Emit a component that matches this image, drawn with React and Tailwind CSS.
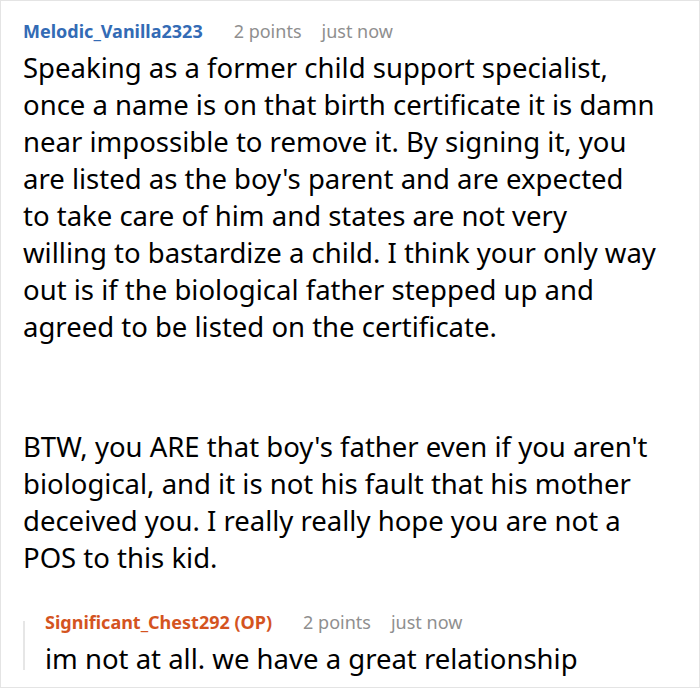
import React from "react";

const Header = ({ name, nameClass, points, time }) => (
  <div className="flex items-baseline text-[18px] leading-[24px]">
    <span className={`font-bold ${nameClass}`}>{name}</span>
    <span className="ml-[31px] text-[#8f8f8f]">{points}</span>
    <span className="ml-[20px] text-[#8f8f8f]">{time}</span>
  </div>
);

const App = () => {
  return (
    <div
      className="w-[700px] h-[688px] border border-[#e4e4e4] bg-white pl-[22px] pt-[18px] overflow-hidden"
      style={{ fontFamily: '"Noto Sans", "Open Sans", sans-serif' }}
    >
      <Header
        name="Melodic_Vanilla2323"
        nameClass="text-[#336bb5]"
        points="2 points"
        time="just now"
      />
      <div className="mt-[6px] text-[27.5px] leading-[37px] text-black">
        <p>
          Speaking as a former child support specialist,
          <br />
          once a name is on that birth certificate it is damn
          <br />
          near impossible to remove it. By signing it, you
          <br />
          are listed as the boy's parent and are expected
          <br />
          to take care of him and states are not very
          <br />
          willing to bastardize a child. I think your only way
          <br />
          out is if the biological father stepped up and
          <br />
          agreed to be listed on the certificate.
        </p>
        <p className="mt-[83px]">
          BTW, you ARE that boy's father even if you aren't
          <br />
          biological, and it is not his fault that his mother
          <br />
          deceived you. I really really hope you are not a
          <br />
          POS to this kid.
        </p>
      </div>
      <div className="mt-[34px] flex">
        <div className="w-[2px] bg-[#e6e6e6] mt-[11px] mb-[7px]" />
        <div className="pl-[20px]">
          <Header
            name="Significant_Chest292 (OP)"
            nameClass="text-[#d4541f]"
            points="2 points"
            time="just now"
          />
          <p className="mt-[6px] text-[27.5px] leading-[37px] text-black">
            im not at all. we have a great relationship
          </p>
        </div>
      </div>
    </div>
  );
};

export default App;
